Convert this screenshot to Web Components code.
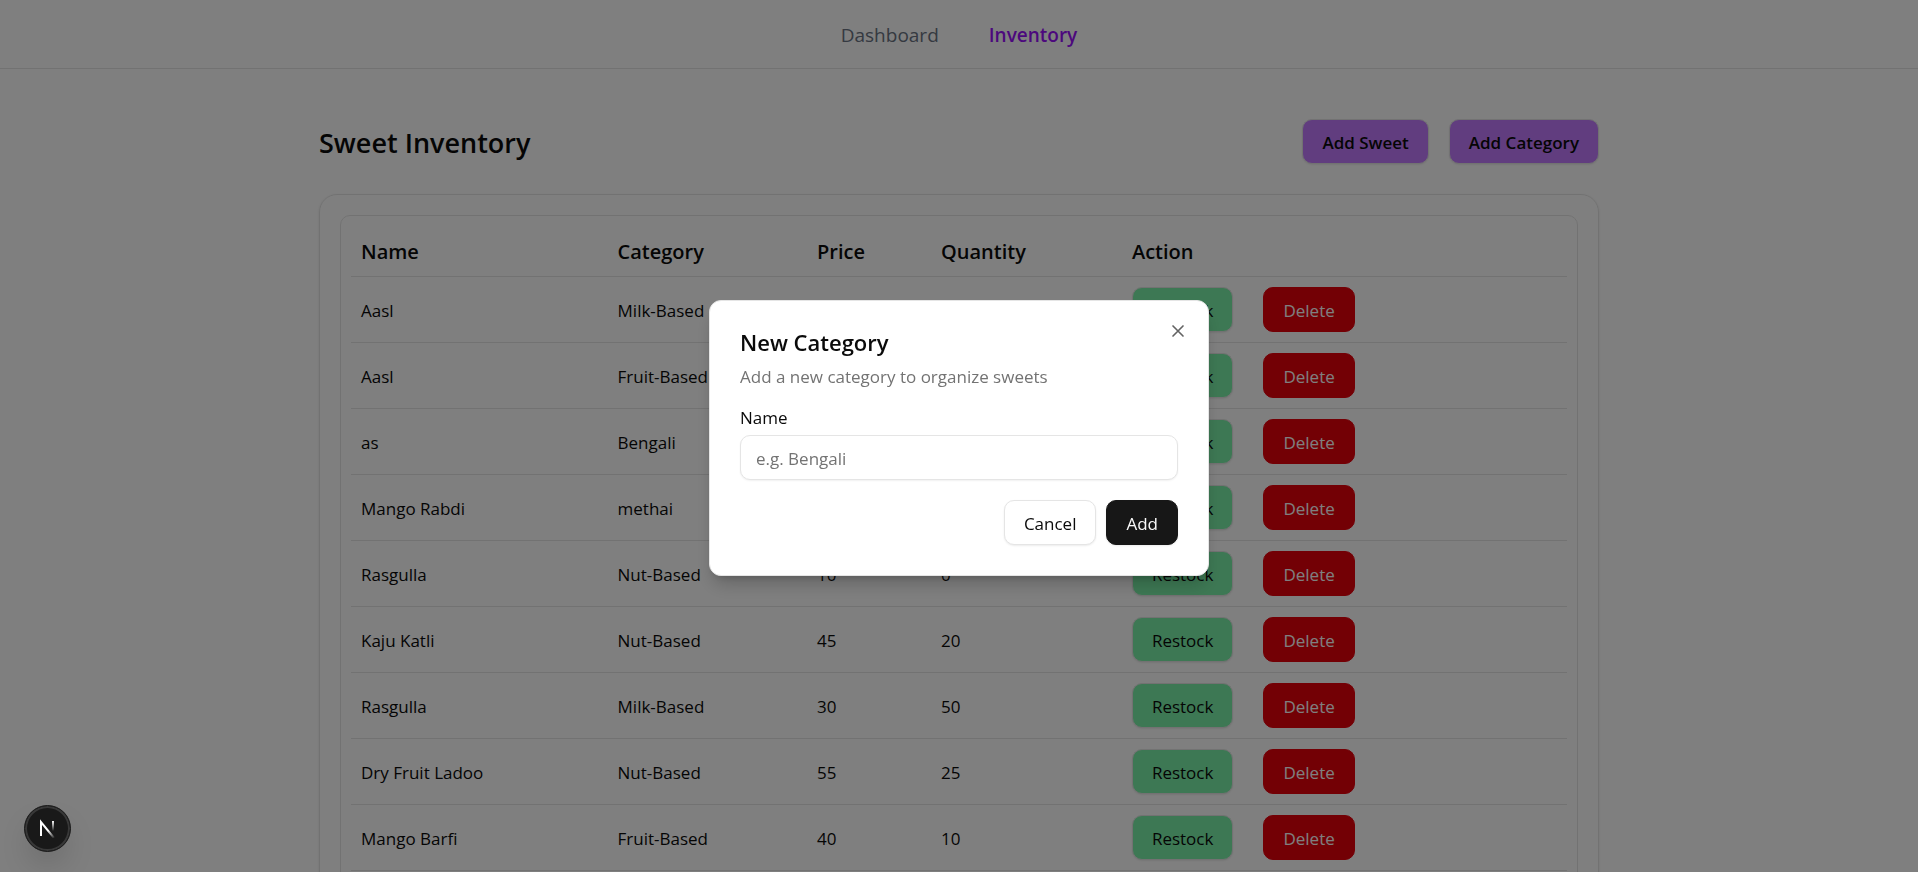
<!DOCTYPE html>
<html lang="en">
<head>
<meta charset="utf-8">
<meta name="viewport" content="width=device-width, initial-scale=1">
<title>Sweet Inventory</title>
<style>
  :root {
    --ink: #0a0a0a;
    --muted: #737373;
    --line: #e5e5e5;
    --dark: #171717;
  }
  body {
    margin: 0;
    height: 100vh;
    overflow: hidden;
    background: #fff;
    color: var(--ink);
    font: 17px/24px "Open Sans", "Noto Sans", sans-serif;
  }
</style>
</head>
<body>
<inventory-app></inventory-app>

<script>
const define = (name, html, setup) => {
  const template = document.createElement('template');
  template.innerHTML = html;
  customElements.define(name, class extends HTMLElement {
    connectedCallback() {
      if (this.shadowRoot) return;
      this.attachShadow({ mode: 'open' }).append(template.content.cloneNode(true));
      if (setup) setup(this, this.shadowRoot);
    }
  });
};

define('ui-button', `
  <style>
    :host { display: inline-block; }
    button {
      display: block; box-sizing: border-box; height: 45px; padding: 2px 19px 0;
      border: 1px solid var(--line); border-radius: 10px;
      background: #fff; color: var(--ink); font: inherit; white-space: nowrap;
      box-shadow: 0 1px 2px rgb(0 0 0 / 8%);
    }
    :host([tone="purple"]) button { background: #c27aff; font-weight: 600; }
    :host([tone="green"]) button { background: #7bf1a8; }
    :host([tone="red"]) button { background: #e7000b; border-color: #e7000b; color: #fff; box-shadow: none; }
    :host([tone="dark"]) button { background: var(--dark); border-color: var(--dark); color: #fafafa; }
  </style>
  <button type="button"><slot></slot></button>`);

define('top-nav', `
  <style>
    :host { display: block; border-bottom: 1px solid var(--line); }
    nav { display: flex; justify-content: center; gap: 50px; padding: 21px 16px 19px; font-size: 19px; line-height: 28px; }
    a { color: #6a7282; text-decoration: none; }
    a[aria-current] { color: #9810fa; font-weight: 600; }
  </style>
  <nav><a href="#dashboard">Dashboard</a><a href="#inventory" aria-current="page">Inventory</a></nav>`);

const sweets = [
  ['Aasl', 'Milk-Based', '', ''],
  ['Aasl', 'Fruit-Based', '', ''],
  ['as', 'Bengali', '', ''],
  ['Mango Rabdi', 'methai', '', ''],
  ['Rasgulla', 'Nut-Based', 10, 0],
  ['Kaju Katli', 'Nut-Based', 45, 20],
  ['Rasgulla', 'Milk-Based', 30, 50],
  ['Dry Fruit Ladoo', 'Nut-Based', 55, 25],
  ['Mango Barfi', 'Fruit-Based', 40, 10],
];

define('sweet-table', `
  <style>
    :host { display: block; border: 1px solid var(--line); border-radius: 10px; padding: 10px; }
    table { width: 100%; border-collapse: separate; border-spacing: 0; table-layout: fixed; }
    th, td { box-sizing: border-box; padding: 2px 10px 0; text-align: left; border-bottom: 1px solid var(--line); }
    th { height: 51px; font-size: 20px; font-weight: 600; }
    td { height: 66px; }
    td:last-child { padding-top: 0; }
    .actions { display: flex; gap: 30px; }
    col.name { width: 21.1%; } col.category { width: 16.4%; } col.price { width: 10.2%; } col.quantity { width: 15.7%; }
  </style>
  <table>
    <colgroup><col class="name"><col class="category"><col class="price"><col class="quantity"><col></colgroup>
    <thead><tr><th>Name</th><th>Category</th><th>Price</th><th>Quantity</th><th>Action</th></tr></thead>
    <tbody></tbody>
  </table>`, (host, root) => {
  root.querySelector('tbody').innerHTML = sweets.map(row => `<tr>${row.map(v => `<td>${v}</td>`).join('')}
    <td><div class="actions"><ui-button tone="green">Restock</ui-button><ui-button tone="red">Delete</ui-button></div></td></tr>`).join('');
});

define('content-card', `
  <style>
    :host { display: block; padding: 20px; border: 1px solid var(--line); border-radius: 18px; box-shadow: 0 1px 3px rgb(0 0 0 / 10%); }
  </style>
  <slot></slot>`);

define('modal-dialog', `
  <style>
    :host { position: fixed; inset: 0; display: grid; place-items: center; padding: 20px 16px 16px; background: rgb(0 0 0 / 50%); }
    section {
      position: relative; box-sizing: border-box; width: 100%; max-width: 500px; padding: 30px;
      border: 1px solid var(--line); border-radius: 12px; background: #fff;
      box-shadow: 0 12px 18px -4px rgb(0 0 0 / 20%), 0 5px 8px -5px rgb(0 0 0 / 20%);
    }
    h2 { margin: 0 0 10px; font-size: 22px; line-height: 23px; font-weight: 600; }
    p { margin: 0 0 20px; color: var(--muted); line-height: 25px; }
    .close { position: absolute; top: 20px; right: 20px; display: flex; padding: 0; border: 0; background: none; color: #636363; }
    footer { display: flex; justify-content: flex-end; gap: 10px; margin-top: 20px; }
  </style>
  <section role="dialog" aria-modal="true" aria-labelledby="title">
    <h2 id="title"><slot name="title"></slot></h2>
    <p><slot name="description"></slot></p>
    <slot></slot>
    <footer><slot name="actions"></slot></footer>
    <button class="close" type="button" aria-label="Close">
      <svg width="20" height="20" viewBox="0 0 24 24" fill="none" stroke="currentColor" stroke-width="2" stroke-linecap="round"><path d="M18 6 6 18M6 6l12 12"/></svg>
    </button>
  </section>`);

define('text-field', `
  <style>
    :host { display: block; }
    label { display: block; margin-bottom: 8px; line-height: 18px; }
    input {
      display: block; box-sizing: border-box; width: 100%; height: 45px; padding: 6px 15px 4px;
      border: 1px solid var(--line); border-radius: 10px; background: #fff; color: var(--ink);
      font: inherit; box-shadow: 0 1px 2px rgb(0 0 0 / 6%); outline: none;
    }
    input::placeholder { color: var(--muted); opacity: 1; }
  </style>
  <label for="field"></label><input id="field" type="text">`, (host, root) => {
  root.querySelector('label').textContent = host.getAttribute('label');
  root.querySelector('input').placeholder = host.getAttribute('placeholder');
});

define('dev-badge', `
  <style>
    :host { position: fixed; left: 24px; bottom: 20px; }
    button {
      display: grid; place-items: center; width: 47px; height: 47px; padding: 0; border: 1px solid #1b1b1b; border-radius: 50%;
      background: #191919; box-shadow: inset 0 0 0 2px #383838, 0 16px 32px -8px rgb(0 0 0 / 24%);
    }
  </style>
  <button type="button" aria-label="Open developer tools">
    <svg width="17" height="19" viewBox="0 0 17 19" fill="none" stroke-width="2">
      <defs>
        <linearGradient id="diagonal" gradientUnits="userSpaceOnUse" x1="10" y1="11" x2="16" y2="19"><stop stop-color="#fff"/><stop offset="1" stop-color="#fff" stop-opacity="0"/></linearGradient>
        <linearGradient id="stem" x1="0" y1="0" x2="0" y2="1"><stop stop-color="#fff"/><stop offset="1" stop-color="#fff" stop-opacity="0"/></linearGradient>
      </defs>
      <path d="M2 17V3L15 19" stroke="url(#diagonal)"/>
      <path d="M13 2h2v10h-2z" fill="url(#stem)"/>
    </svg>
  </button>`);

define('inventory-app', `
  <style>
    :host { display: block; }
    main { max-width: 1280px; margin: 0 auto; padding-top: 50px; }
    header { display: flex; justify-content: space-between; align-items: center; margin-bottom: 30px; }
    h1 { margin: 0; padding-top: 2px; font-size: 27px; line-height: 40px; font-weight: 600; }
    .tools { display: flex; gap: 20px; }
  </style>
  <top-nav></top-nav>
  <main>
    <header>
      <h1>Sweet Inventory</h1>
      <div class="tools"><ui-button tone="purple">Add Sweet</ui-button><ui-button tone="purple">Add Category</ui-button></div>
    </header>
    <content-card><sweet-table></sweet-table></content-card>
  </main>
  <modal-dialog>
    <span slot="title">New Category</span>
    <span slot="description">Add a new category to organize sweets</span>
    <text-field label="Name" placeholder="e.g. Bengali"></text-field>
    <ui-button slot="actions">Cancel</ui-button>
    <ui-button slot="actions" tone="dark">Add</ui-button>
  </modal-dialog>
  <dev-badge></dev-badge>`);
</script>
</body>
</html>
